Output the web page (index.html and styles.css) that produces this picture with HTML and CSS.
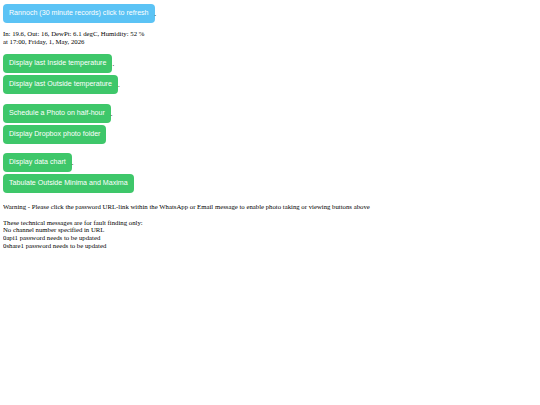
FILE: index.html
```html
<!DOCTYPE html>
<html>
<head>
<meta charset="utf-8">
<link rel="stylesheet" href="styles.css">
</head>
<body>
<div class="row"><span class="btn blue">Rannoch (30 minute records) click to refresh</span>.</div>
<p class="reading">In: 19.6, Out: 16, DewPt: 6.1 degC, Humidity: 52 %<br>at 17:00, Friday, 1, May, 2026</p>
<div class="group first">
  <div class="row"><span class="btn green">Display last Inside temperature</span>.</div>
  <div class="row"><span class="btn green">Display last Outside temperature</span>.</div>
</div>
<div class="group">
  <div class="row"><span class="btn green">Schedule a Photo on half-hour</span>.</div>
  <div class="row"><span class="btn green">Display Dropbox photo folder</span></div>
</div>
<div class="group">
  <div class="row"><span class="btn green">Display data chart</span>.</div>
  <div class="row"><span class="btn green">Tabulate Outside Minima and Maxima</span></div>
</div>
<p class="msg warn">Warning - Please click the password URL-link within the WhatsApp or Email message to enable photo taking or viewing buttons above</p>
<p class="msg">These technical messages are for fault finding only:<br>No channel number specified in URL<br>0api1 password needs to be updated<br>0share1 password needs to be updated</p>
</body>
</html>
```
FILE: styles.css
```css
body {
  margin: 4px 3px;
  font-family: "Liberation Serif", serif;
  font-size: 6.75px;
  line-height: 8px;
  color: #000;
  background: #fff;
}
.row {
  height: 19px;
  margin-bottom: 2px;
  line-height: 19px;
}
.btn {
  display: inline-block;
  height: 19px;
  padding: 0 6px;
  border-radius: 4px;
  font-family: "Liberation Sans", Arial, sans-serif;
  font-size: 7.1px;
  line-height: 19px;
  color: #fff;
  vertical-align: top;
}
.blue { background: #5bc3f5; }
.green { background: #3ec76a; }
.reading {
  margin: 7px 0 0 0;
}
.group {
  margin-top: 9.5px;
}
.group.first {
  margin-top: 8px;
}
.msg {
  margin: 8px 0 0 0;
  line-height: 7.7px;
}
.warn {
  margin-top: 10px;
}
```
